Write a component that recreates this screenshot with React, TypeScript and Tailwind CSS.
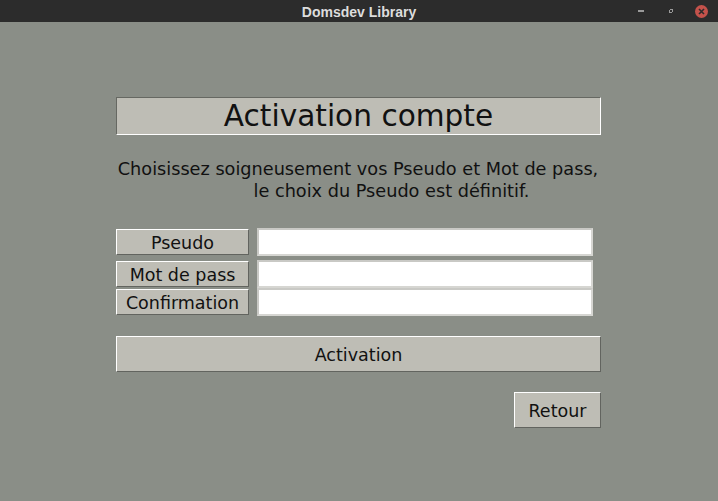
import React from "react";

const font = { fontFamily: '"DejaVu Sans", sans-serif' };

function Raised({ children, className }: { children: React.ReactNode; className: string }) {
  return (
    <div
      className={
        "flex items-center justify-center pt-[2px] bg-[#bebdb5] border-t border-l border-white border-b border-r border-b-[#62645f] border-r-[#62645f] text-[17.5px] text-[#111] " +
        className
      }
    >
      {children}
    </div>
  );
}

function Entry() {
  return <div className="h-[28px] w-[336px] bg-white border-2 border-[#d6d6d2] border-t-[#c9c9c5] border-l-[#c9c9c5]" />;
}

export default function App() {
  return (
    <div className="w-[718px] h-[501px] flex flex-col bg-[#8a8e87] overflow-hidden" style={font}>
      <div className="h-[22px] shrink-0 bg-[#2c2c2c] relative flex items-center justify-center">
        <span
          className="text-[14px] font-bold text-[#dddddd] leading-none pt-[1px]"
          style={{ fontFamily: '"Liberation Sans", sans-serif' }}
        >
          Domsdev Library
        </span>
        <div className="absolute right-[10px] top-0 h-[22px] flex items-center gap-[0px]">
          <div className="w-[6px] h-[2px] bg-[#9a9a9a] mr-[24px]" />
          <svg width="6" height="6" viewBox="0 0 6 6" className="mr-[21px]">
            <path d="M1 5 L1 2 L2 2 L2 4 L4 4 L4 5 Z M5 1 L5 4 L4 4 L4 2 L2 2 L2 1 Z" fill="#9a9a9a" />
          </svg>
          <div className="w-[13px] h-[13px] rounded-full bg-[#c4524b] flex items-center justify-center">
            <svg width="7" height="7" viewBox="0 0 7 7">
              <path d="M1 1 L6 6 M6 1 L1 6" stroke="#2c2c2c" strokeWidth="1.6" />
            </svg>
          </div>
        </div>
      </div>

      <div className="flex flex-col ml-[116px] w-[485px] pt-[75px]">
        <div className="h-[38px] flex items-center justify-center pt-[1px] bg-[#bebdb5] border-t border-l border-[#666862] border-b border-r border-b-white border-r-white text-[29.6px] text-[#111]">
          Activation compte
        </div>

        <div className="mt-[23px] text-[17.7px] leading-[22px] text-[#111] flex flex-col items-center">
          <div className="ml-[-1px]">Choisissez soigneusement vos Pseudo et Mot de pass,</div>
          <div className="pl-[66px]">le choix du Pseudo est définitif.</div>
        </div>

        <div className="mt-[26px] flex flex-col">
          <div className="flex items-center h-[28px] gap-[8px]">
            <Raised className="w-[133px] h-[26px]">Pseudo</Raised>
            <Entry />
          </div>
          <div className="flex items-center h-[28px] gap-[8px] mt-[4px]">
            <Raised className="w-[133px] h-[26px]">Mot de pass</Raised>
            <Entry />
          </div>
          <div className="flex items-center h-[28px] gap-[8px]">
            <Raised className="w-[133px] h-[26px]">Confirmation</Raised>
            <Entry />
          </div>
        </div>

        <Raised className="mt-[20px] h-[36px] w-[485px]">Activation</Raised>

        <div className="mt-[20px] flex justify-end">
          <Raised className="h-[36px] w-[87px]">Retour</Raised>
        </div>
      </div>
    </div>
  );
}
